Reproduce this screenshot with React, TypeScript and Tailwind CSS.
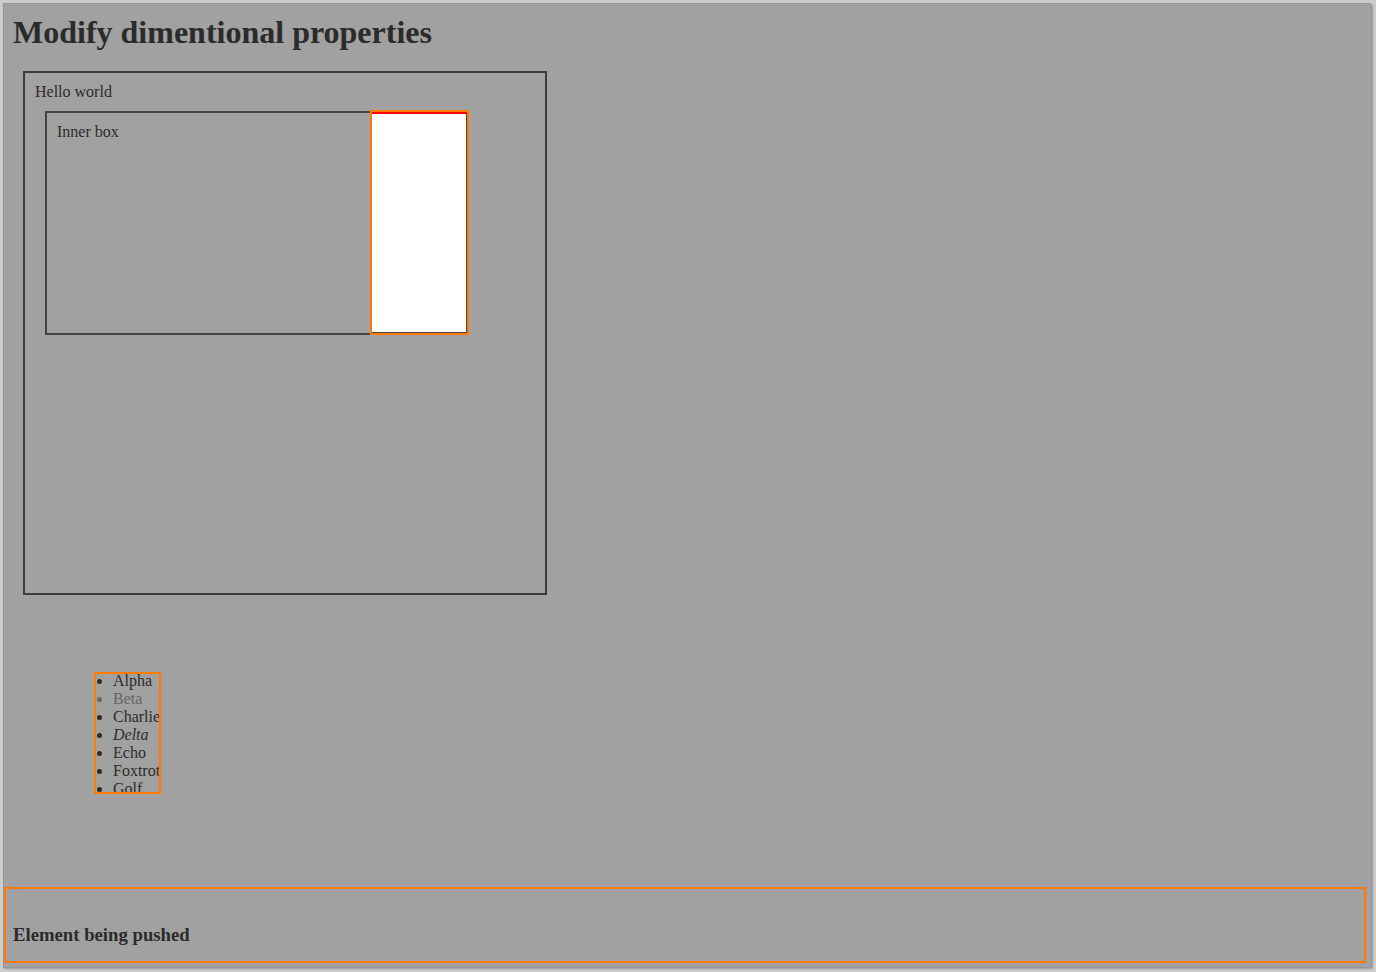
export default function App() {
  const items = ['Alpha', 'Beta', 'Charlie', 'Delta', 'Echo', 'Foxtrot', 'Golf'];

  return (
    <div className="min-h-screen bg-[#cdcdcd] p-[3px] font-['Liberation_Serif',serif] text-[#2b2b2b]">
      <div className="h-[965px] w-[1369px] bg-[#a1a1a1] border border-[#959595] rounded-tr-[3px] shadow-[1px_1px_2px_rgba(0,0,0,0.25)] flex flex-col">
        {/* Heading */}
        <h1 className="mt-[10px] ml-[9px] text-[32px] leading-[37px] font-bold">
          Modify dimentional properties
        </h1>

        {/* Outer box */}
        <div className="mt-[20px] ml-[19px] w-[524px] h-[524px] border-2 border-[#3b3b3b] p-[10px] flex flex-col text-[16px] leading-[18px]">
          <div>Hello world</div>
          <div className="mt-[10px] ml-[10px] w-[424px] h-[224px] border-2 border-[#444] flex">
            <div className="flex-1 p-[10px]">Inner box</div>
            <div className="w-[95px] bg-white border-t-[2px] border-t-[#ff0000] border-r border-b border-r-[#444] border-b-[#444] -mt-[1px] outline-2 outline-[#ff7a00] outline-offset-0" />
          </div>
        </div>

        {/* List */}
        <ul className="mt-[77px] ml-[90px] w-[67px] h-[122px] overflow-hidden outline-2 outline-[#ff7a00] -outline-offset-2 list-disc pl-[19px] text-[16px] leading-[18px]">
          {items.map((item) => (
            <li
              key={item}
              className={
                item === 'Beta'
                  ? 'text-[#666]'
                  : item === 'Delta'
                  ? 'italic'
                  : ''
              }
            >
              {item}
            </li>
          ))}
        </ul>

        {/* Pushed element */}
        <div className="mt-[93px] w-[1362px] h-[76px] border-2 border-[#ff7a00] pl-[7px] pt-[35px]">
          <h3 className="text-[18.72px] leading-[22px] font-bold">Element being pushed</h3>
        </div>
      </div>
    </div>
  );
}
